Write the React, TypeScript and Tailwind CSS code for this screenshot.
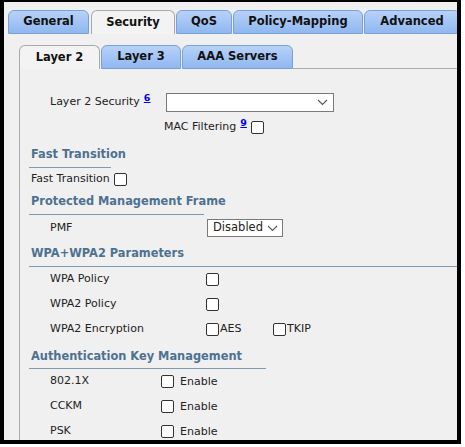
import React from "react";

const Chevron = () => (
  <svg width="11" height="7" viewBox="0 0 11 7" className="block">
    <polyline points="1,1 5.5,5.5 10,1" fill="none" stroke="#555" strokeWidth="1.1" />
  </svg>
);

const Box = () => (
  <span className="inline-block w-[13px] h-[13px] border border-[#333] bg-white rounded-[2px] box-border shrink-0" />
);

const Sup = ({ n }: { n: string }) => (
  <a className="text-[9.5px] font-bold text-[#0000ee] underline relative -top-[5px] ml-[4px] leading-none">{n}</a>
);

const Header = ({ text, w }: { text: string; w: string }) => (
  <div className={`ml-[9px] pl-[2px] ${w} border-b border-[#7f9bb0] font-bold text-[#4e7190] text-[11.4px] leading-[16px]`}>
    {text}
  </div>
);

export default function App() {
  const inactive =
    "h-[24px] flex items-center justify-center rounded-t-[6px] border border-[#7aa0d6] bg-gradient-to-b from-[#b8d2f8] to-[#8fb7f0] font-bold text-[11.5px] text-[#111] box-border shrink-0";
  const active =
    "h-[24px] flex items-center justify-center rounded-t-[6px] border border-b-0 border-[#a9a9a9] bg-[#f3f3f3] font-bold text-[11.5px] text-[#111] box-border shrink-0";
  return (
    <div className="w-[465px] h-[447px] bg-white font-['DejaVu_Sans',sans-serif]">
      <div className="w-[461px] h-[444px] border-black border-l-[4px] border-r-[4px] border-b-[4px] border-t-[2px] bg-[#f0f0f0] overflow-hidden box-border">
        <div className="pt-[8px] pl-[4px] flex items-end">
          <div className={`${inactive} w-[81px]`}>General</div>
          <div className={`${active} w-[84px] ml-[2px]`}>Security</div>
          <div className={`${inactive} w-[56px] ml-[1px]`}>QoS</div>
          <div className={`${inactive} w-[130px] ml-[1px]`}>Policy-Mapping</div>
          <div className={`${inactive} w-[96px] ml-[1px]`}>Advanced</div>
        </div>
        <div className="pl-[15px] mt-[11px]">
          <div className="flex items-end">
            <div className={`${active} w-[81px]`}>Layer 2</div>
            <div className={`${inactive} w-[80px] ml-[1px]`}>Layer 3</div>
            <div className={`${inactive} w-[111px] ml-[1px]`}>AAA Servers</div>
            <div className="flex-1 h-[24px] border-b border-[#a9a9a9]" />
          </div>
          <div className="border-l border-[#a9a9a9] text-[11px] text-[#222] h-[400px]">
            <div className="h-[21px]" />
            <div className="h-[25px] flex items-center pl-[30px]">
              <div className="w-[116px] flex items-center whitespace-nowrap">
                <span>Layer 2 Security</span>
                <Sup n="6" />
              </div>
              <div className="w-[168px] h-[19px] border border-[#7a7a7a] bg-white box-border flex items-center justify-end pr-[5px]">
                <Chevron />
              </div>
            </div>
            <div className="h-[25px] flex items-center pl-[144px]">
              <div className="w-[87px] flex items-center whitespace-nowrap">
                <span>MAC Filtering</span>
                <Sup n="9" />
              </div>
              <Box />
            </div>
            <div className="pt-[6px]">
              <Header text="Fast Transition" w="w-[82px] pb-[5px] whitespace-nowrap" />
            </div>
            <div className="h-[22px] flex items-center pl-[11px]">
              <span className="w-[83px] whitespace-nowrap">Fast Transition</span>
              <Box />
            </div>
            <div className="pt-[3px]">
              <Header text="Protected Management Frame" w="w-[175px] pb-[5px] whitespace-nowrap" />
            </div>
            <div className="h-[26px] flex items-center pl-[30px]">
              <span className="w-[157px]">PMF</span>
              <div className="w-[76px] h-[18px] border border-[#7a7a7a] bg-white box-border flex items-center justify-between pl-[5px] pr-[4px] text-[11.5px]">
                <span>Disabled</span>
                <Chevron />
              </div>
            </div>
            <div className="pt-[4px]">
              <Header text="WPA+WPA2 Parameters" w="pb-[5px] whitespace-nowrap" />
            </div>
            <div className="h-[25px] flex items-center pl-[30px]">
              <span className="w-[156px]">WPA Policy</span>
              <Box />
            </div>
            <div className="h-[25px] flex items-center pl-[30px]">
              <span className="w-[156px]">WPA2 Policy</span>
              <Box />
            </div>
            <div className="h-[25px] flex items-center pl-[30px]">
              <span className="w-[156px]">WPA2 Encryption</span>
              <div className="w-[67px] flex items-center">
                <Box />
                <span className="ml-[1px]">AES</span>
              </div>
              <Box />
              <span className="ml-[1px]">TKIP</span>
            </div>
            <div className="pt-[6px]">
              <Header text="Authentication Key Management" w="w-[237px] pb-[4px] whitespace-nowrap" />
            </div>
            <div className="h-[25px] flex items-center pl-[30px]">
              <span className="w-[111px]">802.1X</span>
              <Box />
              <span className="ml-[6px] mt-[2px]">Enable</span>
            </div>
            <div className="h-[25px] flex items-center pl-[30px]">
              <span className="w-[111px]">CCKM</span>
              <Box />
              <span className="ml-[6px] mt-[2px]">Enable</span>
            </div>
            <div className="h-[25px] flex items-center pl-[30px]">
              <span className="w-[111px]">PSK</span>
              <Box />
              <span className="ml-[6px] mt-[2px]">Enable</span>
            </div>
          </div>
        </div>
      </div>
    </div>
  );
}
